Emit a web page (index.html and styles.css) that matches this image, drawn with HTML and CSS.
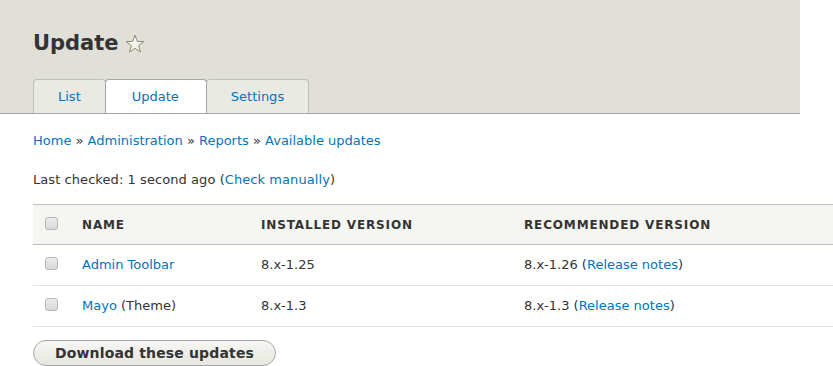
FILE: index.html
```html
<!DOCTYPE html>
<html lang="en">
<head>
    <meta charset="UTF-8">
    <title>Update</title>
    <link rel="stylesheet" href="styles.css">
</head>
<body>
    <div class="page-header">
        <h1 class="page-title">Update
            <svg class="shortcut" width="20" height="20" viewBox="0 0 20 20">
                <path d="M10 1.2 L12.3 7.4 L18.8 7.6 L13.7 11.6 L15.5 18 L10 14.3 L4.5 18 L6.3 11.6 L1.2 7.6 L7.7 7.4 Z" fill="#f4f4ee" stroke="#8c8c74" stroke-width="1" stroke-linejoin="round"/>
            </svg>
        </h1>
        <ul class="tabs">
            <li class="tab"><a href="#">List</a></li>
            <li class="tab active"><a href="#">Update</a></li>
            <li class="tab"><a href="#">Settings</a></li>
        </ul>
    </div>

    <div class="content">
        <nav class="breadcrumb">
            <a href="#">Home</a> » <a href="#">Administration</a> » <a href="#">Reports</a> » <a href="#">Available updates</a>
        </nav>

        <p class="last-checked">Last checked: 1 second ago (<a href="#">Check manually</a>)</p>

        <table class="updates">
            <colgroup>
                <col class="col-select">
                <col class="col-name">
                <col class="col-installed">
                <col>
            </colgroup>
            <thead>
                <tr>
                    <th><input type="checkbox" class="check"></th>
                    <th>Name</th>
                    <th>Installed version</th>
                    <th>Recommended version</th>
                </tr>
            </thead>
            <tbody>
                <tr>
                    <td><input type="checkbox" class="check"></td>
                    <td><a href="#">Admin Toolbar</a></td>
                    <td>8.x-1.25</td>
                    <td>8.x-1.26 (<a href="#">Release notes</a>)</td>
                </tr>
                <tr>
                    <td><input type="checkbox" class="check"></td>
                    <td><a href="#">Mayo</a> (Theme)</td>
                    <td>8.x-1.3</td>
                    <td>8.x-1.3 (<a href="#">Release notes</a>)</td>
                </tr>
            </tbody>
        </table>

        <button class="button">Download these updates</button>
    </div>
</body>
</html>
```
FILE: styles.css
```css
body {
    font-family: "DejaVu Sans", Verdana, sans-serif;
    font-size: 13px;
    color: #333;
    margin: 0;
    background: white;
    overflow: hidden;
}
a {
    color: #0074bd;
    text-decoration: none;
}
.page-header {
    width: 767px;
    background: #e0e0d8;
    padding: 31px 0 0 33px;
    border-bottom: 1px solid #a6a6a6;
}
.page-title {
    font-size: 21px;
    line-height: 25px;
    font-weight: bold;
    margin: 0 0 23px 0;
    display: flex;
    align-items: center;
    gap: 6px;
}
.shortcut {
    margin-top: 1px;
}
.tabs {
    list-style: none;
    margin: 0;
    padding: 0;
    display: flex;
}
.tab {
    background: #eaeae5;
    border: 1px solid #bfbfba;
    border-bottom: none;
    border-radius: 4px 4px 0 0;
    margin-right: -1px;
}
.tab a {
    display: block;
    padding: 0 24px;
    line-height: 33px;
}
.tab.active {
    background: white;
    border-color: #a6a6a6;
    position: relative;
    z-index: 1;
}
.tab.active a {
    padding: 0 27px 0 26px;
}
.content {
    padding: 0 0 0 33px;
}
.breadcrumb {
    margin-top: 19px;
    line-height: 16px;
}
.last-checked {
    margin: 23px 0 0 0;
    line-height: 16px;
    letter-spacing: 0.07px;
}
.updates {
    margin-top: 16px;
    width: 820px;
    table-layout: fixed;
    border-collapse: collapse;
}
.col-select {
    width: 37px;
}
.col-name {
    width: 179px;
}
.col-installed {
    width: 263px;
}
.updates th {
    background: #f5f5f2;
    border-top: 1px solid #bfbfba;
    border-bottom: 1px solid #bfbfba;
    text-align: left;
    text-transform: uppercase;
    font-size: 12px;
    letter-spacing: 0.85px;
    padding: 0 12px;
    height: 39px;
}
.updates td {
    border-bottom: 1px solid #e6e4df;
    padding: 0 12px 2px;
    height: 38px;
}
.check {
    appearance: none;
    -webkit-appearance: none;
    width: 13px;
    height: 13px;
    margin: 0;
    border: 1px solid #b8b8b8;
    border-radius: 3px;
    background: linear-gradient(#ececec, #d8d8d8);
    display: block;
    margin-top: -2px;
}
.button {
    margin-top: 13px;
    font-family: "DejaVu Sans", Verdana, sans-serif;
    font-size: 14px;
    font-weight: bold;
    line-height: 16px;
    letter-spacing: 0.15px;
    color: #333;
    padding: 4px 21px;
    border: 1px solid #a6a6a6;
    border-radius: 20px;
    background: linear-gradient(#f6f6f3, #e7e7df);
}
```
